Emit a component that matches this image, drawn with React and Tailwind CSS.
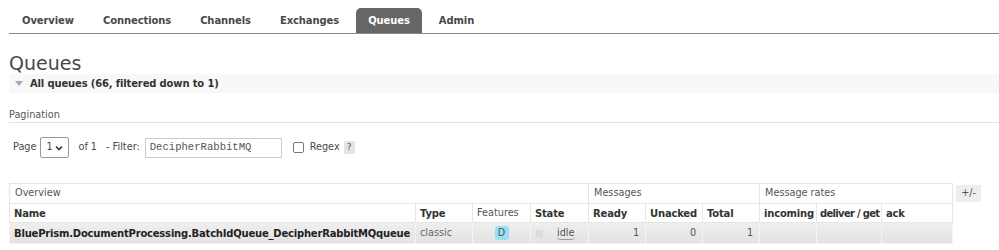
import React from "react";

const tabs = ["Overview", "Connections", "Channels", "Exchanges", "Queues", "Admin"];

const cols = [
  { label: "Name", w: "w-[406px]" },
  { label: "Type", w: "w-[57px]" },
  { label: "Features", w: "w-[58px]", normal: true },
  { label: "State", w: "w-[58px]" },
  { label: "Ready", w: "w-[57px]" },
  { label: "Unacked", w: "w-[57px]" },
  { label: "Total", w: "w-[57px]" },
  { label: "incoming", w: "w-[57px]" },
  { label: "deliver / get", w: "w-[65px]", tight: true },
  { label: "ack", w: "w-[71px]" },
];

const App = () => {
  return (
    <div className="w-[999px] h-[250px] bg-white text-[#484848] font-['DejaVu_Sans',Verdana,sans-serif] text-[9.7px] overflow-hidden">
      {/* Top navigation */}
      <div className="pt-[8px] pl-[9px]">
        <ul className="flex h-[26px] border-b border-[#888] pl-[1px]">
          {tabs.map((t) => (
            <li
              key={t}
              className={`mr-[5px] px-[12px] flex items-center font-bold text-[10px] tracking-[-0.1px] rounded-t-[5px] ${
                t === "Queues" ? "bg-[#666] text-white" : "text-[#484848]"
              }`}
            >
              {t}
            </li>
          ))}
        </ul>
      </div>

      <div className="pl-[9px]">
        <h1 className="text-[19px] leading-[22px] mt-[18px] text-[#484848]">Queues</h1>

        <div className="flex items-center h-[19px] bg-[#f8f8f8]">
          <span className="ml-[6px] mr-[7px] w-0 h-0 border-l-[4px] border-r-[4px] border-t-[5px] border-l-transparent border-r-transparent border-t-[#aaa]" />
          <span className="font-bold text-[10px] tracking-[-0.15px] text-[#333]">All queues (66, filtered down to 1)</span>
        </div>

        <div className="mt-[15px] text-[#555] leading-[14px]">Pagination</div>
        <div className="border-b border-[#e2e2e2]" />

        {/* Pagination controls */}
        <div className="flex items-center h-[21px] mt-[14px] pl-[4px] text-[#484848]">
          <span>Page</span>
          <div className="ml-[4px] w-[29px] h-[21px] border border-[#999] rounded-[2px] flex items-center justify-between px-[5px] bg-white">
            <span>1</span>
            <svg width="8" height="6" viewBox="0 0 8 6">
              <path d="M1 1.5l3 3 3-3" fill="none" stroke="#333" strokeWidth="1.6" />
            </svg>
          </div>
          <span className="ml-[9px]">of 1</span>
          <span className="ml-[9px]">- Filter:</span>
          <div className="ml-[5px] w-[137px] h-[20px] border border-[#ccc] flex items-center pl-[4px] font-['Liberation_Mono',monospace] text-[10.6px] text-[#555]">
            DecipherRabbitMQ
          </div>
          <span className="ml-[11px] w-[11px] h-[11px] border border-[#777] rounded-[2px] bg-white" />
          <span className="ml-[6px]">Regex</span>
          <span className="ml-[4px] w-[11px] h-[13px] bg-[#e4e4e4] flex items-center justify-center text-[9px] text-[#555]">?</span>
        </div>

        {/* Queue table */}
        <div className="flex items-start mt-[25px]">
          <table className="table-fixed border-collapse w-[943px] border border-[#e6e6e6]">
            <colgroup>
              {cols.map((c) => (
                <col key={c.label} className={c.w} />
              ))}
            </colgroup>
            <thead>
              <tr className="h-[20px] text-[#555]">
                <th colSpan={4} className="text-left font-normal px-[5px] border border-[#e6e6e6]">Overview</th>
                <th colSpan={3} className="text-left font-normal px-[5px] border border-[#e6e6e6]">Messages</th>
                <th colSpan={3} className="text-left font-normal px-[5px] border border-[#e6e6e6]">Message rates</th>
              </tr>
              <tr className="h-[19px]">
                {cols.map((c) => (
                  <th
                    key={c.label}
                    className={`text-left border border-[#e6e6e6] whitespace-nowrap ${
                      c.normal
                        ? "px-[4px] font-normal text-[#555]"
                        : c.tight
                        ? "px-[3px] font-bold text-[10px] tracking-[-0.7px] text-[#333]"
                        : "px-[4px] font-bold text-[10px] tracking-[-0.2px] text-[#333]"
                    }`}
                  >
                    {c.label}
                  </th>
                ))}
              </tr>
            </thead>
            <tbody>
              <tr className="h-[21px] bg-gradient-to-b from-[#efefef] to-[#e2e2e2]">
                <td className="px-[4px] font-bold text-[10px] tracking-[-0.2px] text-[#222] whitespace-nowrap border border-[#f4f4f4]">
                  BluePrism.DocumentProcessing.BatchIdQueue_DecipherRabbitMQqueue
                </td>
                <td className="px-[4px] text-[#666] border border-[#f4f4f4]">classic</td>
                <td className="text-center border border-[#f4f4f4]">
                  <span className="inline-flex items-center justify-center w-[14px] h-[14px] rounded-[3px] bg-[#99e0f5] text-[#555]">
                    D
                  </span>
                </td>
                <td className="px-[5px] border border-[#f4f4f4]">
                  <div className="flex items-center">
                    <span className="w-[7px] h-[7px] bg-[#dcdcdc]" />
                    <span className="ml-[14px] leading-[12px] border-b border-[#999] rounded-b-[4px] text-[#555]">idle</span>
                  </div>
                </td>
                <td className="text-right pr-[6px] text-[#555] border border-[#f4f4f4]">1</td>
                <td className="text-right pr-[6px] text-[#555] border border-[#f4f4f4]">0</td>
                <td className="text-right pr-[6px] text-[#555] border border-[#f4f4f4]">1</td>
                <td className="border border-[#f4f4f4]" />
                <td className="border border-[#f4f4f4]" />
                <td className="border border-[#f4f4f4]" />
              </tr>
            </tbody>
          </table>
          <div className="ml-[3px] mt-[2px] w-[25px] h-[17px] bg-[#eee] flex items-center justify-center text-[#555]">
            +/-
          </div>
        </div>
      </div>
    </div>
  );
};

export default App;
